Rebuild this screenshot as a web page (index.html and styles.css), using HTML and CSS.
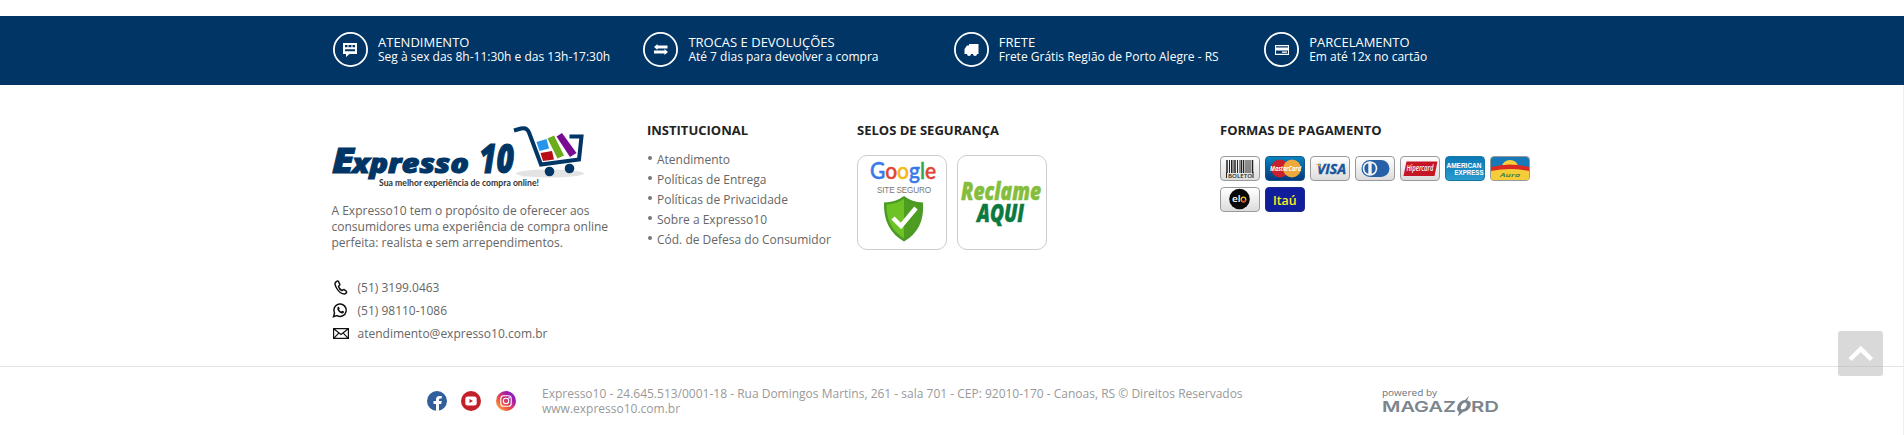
FILE: index.html
```html
<!DOCTYPE html>
<html lang="pt-BR">
<head>
<meta charset="utf-8">
<title>Expresso 10</title>
<link rel="stylesheet" href="styles.css">
</head>
<body>
<section class="benefits">
  <div class="container benefits-row">
    <div class="benefit">
      <svg class="ring" viewBox="0 0 35 35"><circle cx="17.5" cy="17.5" r="16.6"/><path class="solid" fill-rule="evenodd" d="M10 11h14v11h-7.500l-3.500 3v-3h-3zM12 13v2.300h10v-2.300zM12 17.200v2h10v-2z"/><path class="solid" d="M14.500 13h1v3h-1zM18.500 13h1v3h-1z"/></svg>
      <div><strong>ATENDIMENTO</strong><span>Seg à sex das 8h-11:30h e das 13h-17:30h</span></div>
    </div>
    <div class="benefit">
      <svg class="ring" viewBox="0 0 35 35"><circle cx="17.5" cy="17.5" r="16.6"/><path class="solid" d="M11 15l3.500-3v1.500H24.500v3H14.500v1.500zM25 20l-3.500 3v-1.500H11v-3h10.500V17z"/></svg>
      <div><strong>TROCAS E DEVOLUÇÕES</strong><span>Até 7 dias para devolver a compra</span></div>
    </div>
    <div class="benefit">
      <svg class="ring" viewBox="0 0 35 35"><circle cx="17.5" cy="17.5" r="16.6"/><path class="solid" d="M15 12h9.500v10h-1.500a2 2 0 0 1-4 0h-2a2 2 0 0 1-4 0h-2.500v-5l2.500-3.500h2z"/></svg>
      <div><strong>FRETE</strong><span>Frete Grátis Região de Porto Alegre - RS</span></div>
    </div>
    <div class="benefit">
      <svg class="ring" viewBox="0 0 35 35"><circle cx="17.500" cy="17.500" r="16.600"/><path class="solid" fill-rule="evenodd" d="M11 13h14v10h-14zM12 14.200v1.300h12v-1.300zM12 18.500v3.300h12v-3.300z"/><path class="solid" d="M18 19.500h5v1.300h-5z"/></svg>
      <div><strong>PARCELAMENTO</strong><span>Em até 12x no cartão</span></div>
    </div>
  </div>
</section>

<footer class="footer">
  <div class="container footer-cols">
    <div class="about">
      <svg class="logo" viewBox="0 0 252 64">
        <ellipse cx="218" cy="47.500" rx="34" ry="4" fill="#e3e3e3"/>
        <g class="logo-name" stroke="#003565" stroke-width="1">
          <text x="0" y="47" font-size="35" textLength="22" lengthAdjust="spacingAndGlyphs">E</text>
          <text x="20" y="47" font-size="27" textLength="117" lengthAdjust="spacingAndGlyphs">xpresso</text>
          <text x="147" y="47" font-size="40" textLength="35" lengthAdjust="spacingAndGlyphs">10</text>
        </g>
        <text class="slogan" x="47" y="60" textLength="160" lengthAdjust="spacingAndGlyphs">Sua melhor experiência de compra online!</text>
        <path d="M204.500 16l10-3 2.500 9.500-9.500 2.500z" fill="#2695ed"/>
        <path d="M208.500 27l11.500-2 2 8.500-11 1.500z" fill="#b80e16"/>
        <path d="M215.500 12.500l6.500-3 10 20-6.500 3z" fill="#6cab1c"/>
        <path d="M224.500 10.500l5.500-3.500 14.500 20-6.500 4z" fill="#790b91"/>
        <path d="M182 4.500l7-2q6-1.500 8 4l12 32 38-5 2.500-23h-12" fill="none" stroke="#003565" stroke-width="4"/>
        <circle cx="217.500" cy="45.500" r="4.800" fill="#003565"/><circle cx="237.500" cy="42.500" r="4.800" fill="#003565"/>
      </svg>
      <p class="intro"><span>A Expresso10 tem o propósito de oferecer aos</span><span>consumidores uma experiência de compra online</span><span>perfeita: realista e sem arrependimentos.</span></p>
      <ul class="contacts">
        <li><svg viewBox="0 0 17 17"><path d="M4.500 2.500c-2 1-2 3 0 6.500s5.500 6 8 6c1.500-.5 2.500-1.500 2-2.500L12 10.500c-1.500 0-1.200 1.200-2 1-1.500-.6-3-2.300-3.500-4 0-.8 1.400-.8 1.300-2L6.500 2.500c-.5-.8-1.200-.6-2 0z"/></svg>(51) 3199.0463</li>
        <li><svg viewBox="0 0 17 17"><path d="M1.500 14.700l1-3.700a6.200 6.200 0 1 1 2.500 2.600z"/><path class="fill" d="M5.700 5l1.200-.2.900 1.900-.7.900q.8 1.300 2.200 2l.9-.9 1.900.9c0 1.700-1.600 2.200-3.100 1.600-2.200-.9-4.600-3.500-3.300-6.200z"/></svg>(51) 98110-1086</li>
        <li><svg class="mail" viewBox="0 0 17 17"><path d="M1.600 3.600h14.800v9.800H1.600zM2 4l7 5.500L16 4M2 13.200l4.700-5M16 13.200l-4.700-5"/></svg>atendimento@expresso10.com.br</li>
      </ul>
    </div>
    <nav class="links">
      <h2>INSTITUCIONAL</h2>
      <ul><li>Atendimento</li><li>Políticas de Entrega</li><li>Políticas de Privacidade</li><li>Sobre a Expresso10</li><li>Cód. de Defesa do Consumidor</li></ul>
    </nav>
    <div class="seals">
      <h2>SELOS DE SEGURANÇA</h2>
      <div class="seal-row">
        <svg class="seal" viewBox="1 1 88 93">
          <text class="google" x="13" y="24" textLength="66" lengthAdjust="spacingAndGlyphs"><tspan fill="#3779e9" stroke="#3779e9">G</tspan><tspan fill="#e04432" stroke="#e04432">o</tspan><tspan fill="#f5b914" stroke="#f5b914">o</tspan><tspan fill="#3779e9" stroke="#3779e9">g</tspan><tspan fill="#31a550" stroke="#31a550">l</tspan><tspan fill="#e04432" stroke="#e04432">e</tspan></text>
          <text class="safe" x="20" y="38" textLength="54">SITE SEGURO</text>
          <path d="M47 41q8 6 19 6.500 2 27-19 39-21-12-20-39 12-.5 20-6.500z" fill="#4b9a25"/>
          <path d="M47 44q7 5 16.500 5.500 1 23-16.500 34z" fill="#4c9d20"/><path d="M47 44q-8 5-17.500 5.500-.500 23 17.500 34z" fill="#6dc326"/>
          <path d="M36 63l8 8 15-18" fill="none" stroke="#fff" stroke-width="4.500"/>
        </svg>
        <svg class="seal" viewBox="1 1 88 93">
          <text class="reclame" x="4" y="44.500" font-size="24" fill="#85bd3d" stroke="#85bd3d" textLength="80" lengthAdjust="spacingAndGlyphs">Reclame</text>
          <text class="reclame" x="20" y="67" font-size="24.500" fill="#0c7940" stroke="#0c7940" textLength="47" lengthAdjust="spacingAndGlyphs">AQUI</text>
        </svg>
      </div>
    </div>
    <div class="payments">
      <h2>FORMAS DE PAGAMENTO</h2>
      <div class="cards">
        <svg class="card" viewBox="0 0 38 23"><path stroke="#222" stroke-width="1.500" d="M6 3v13M31.500 3v13M14 3v13M22.500 3v13"/><path stroke="#222" stroke-width="1" d="M8.500 3v13M10.500 3v13M12 3v13M16.500 3v13M19 3v13M20.500 3v13M25 3v13M27 3v13M29 3v13"/><path stroke="#222" d="M5.500 15v6M32 15v6"/><text x="7" y="21" font-size="5.500" font-weight="600" fill="#222" textLength="24" lengthAdjust="spacingAndGlyphs">BOLETO</text></svg>
        <svg class="card blue" viewBox="0 0 38 23"><circle cx="14" cy="11.500" r="9" fill="#c8202d"/><circle cx="26" cy="11.500" r="9" fill="#efa83b"/><text x="4" y="14" font-size="7" font-weight="700" font-style="italic" fill="#fff" textLength="31" lengthAdjust="spacingAndGlyphs">MasterCard</text></svg>
        <svg class="card" viewBox="0 0 38 23"><text x="6" y="17" font-size="14" font-weight="700" font-style="italic" fill="#17559c" stroke="#17559c" stroke-width=".4" textLength="29" lengthAdjust="spacingAndGlyphs">VISA</text><path d="M4.500 7h4l2.500 5.500q-2-4-6.500-5.500z" fill="#f0a32a"/></svg>
        <svg class="card" viewBox="0 0 38 23"><path d="M15 3h10a8.500 8.500 0 0 1 0 17H15z" fill="#2760a7"/><circle cx="14" cy="11.500" r="8.500" fill="#2760a7"/><circle cx="14" cy="11.500" r="7.300" fill="#f4f4f4"/><path d="M12.300 6.300v10.400a5.400 5.400 0 0 1 0-10.400zM15.700 6.300v10.400a5.400 5.400 0 0 0 0-10.400z" fill="#2760a7"/></svg>
        <svg class="card" viewBox="0 0 38 23"><path d="M5.500 4.500h31l-3 14.500h-31z" fill="#c51625"/><text x="5.500" y="14" font-size="8" font-weight="600" font-style="italic" fill="#fff" textLength="27" lengthAdjust="spacingAndGlyphs">Hipercard</text></svg>
        <svg class="card amex" viewBox="0 0 38 23"><text x=".5" y="10.500" font-size="6.500" textLength="35" lengthAdjust="spacingAndGlyphs">AMERICAN</text><text x="8.500" y="18" font-size="6.500" textLength="29" lengthAdjust="spacingAndGlyphs">EXPRESS</text></svg>
        <svg class="card aura" viewBox="0 0 38 23"><path d="M0 0h38v12H0z" fill="#1779b8"/><path d="M11 9.500a8 6.500 0 0 1 16 0z" fill="#fbd13a"/><path d="M0 10q19-5 38 0v5H0z" fill="#d92b22"/><path d="M0 14q19-4 38 0v9H0z" fill="#f5cd38"/><text x="9" y="19.500" font-size="5.500" font-style="italic" font-weight="600" fill="#33754b" textLength="20" lengthAdjust="spacingAndGlyphs">Aura</text></svg>
        <svg class="card" viewBox="0 0 38 23"><circle cx="18.500" cy="11" r="10.300" fill="#080808"/><text x="11" y="14" font-size="9.500" font-weight="600" fill="#fff" textLength="8.500" lengthAdjust="spacingAndGlyphs">el</text><circle cx="22.500" cy="11.500" r="2.300" fill="none" stroke="#f0c51d" stroke-width="1.300"/><path d="M20.500 12.500a2.300 2.300 0 0 0 4.300-.5" fill="none" stroke="#e63c25" stroke-width="1.300"/></svg>
        <svg class="card itau" viewBox="0 0 38 23"><text x="7" y="16.500" font-size="13" font-weight="600" fill="#fff01e" textLength="23.500" lengthAdjust="spacingAndGlyphs">Itaú</text></svg>
      </div>
    </div>
  </div>
  <div class="bottom">
    <div class="social">
      <svg viewBox="0 0 20 20"><circle cx="10" cy="10" r="10" fill="#315f9b"/><path d="M9 20v-7H6.500v-3H9V8.500q0-3.500 3.500-3.500h2.300v2.600h-1.500q-1.300 0-1.300 1.200V10h2.700l-.5 3H12v6.800z" fill="#fff"/></svg>
      <svg viewBox="0 0 20 20"><circle cx="10" cy="10" r="10" fill="#c4202a"/><rect x="4.300" y="5.500" width="11.400" height="9" rx="2.500" fill="#fff"/><path d="M8.500 8v4l3.500-2z" fill="#c4202a"/></svg>
      <svg class="insta" viewBox="0 0 20 20"><defs><linearGradient id="ig" x1="0" y1="1" x2="1" y2="0"><stop offset="0" stop-color="#ffc52c"/><stop offset=".4" stop-color="#e84b4d"/><stop offset=".7" stop-color="#a51cab"/><stop offset="1" stop-color="#6a21ce"/></linearGradient></defs><circle cx="10" cy="10" r="10" fill="url(#ig)"/><g fill="none" stroke="#fff" stroke-width="1.100"><rect x="4.800" y="4.800" width="10.400" height="10.400" rx="2.800"/><circle cx="10" cy="10" r="2.700"/></g><circle cx="13.100" cy="6.900" r=".8" fill="#fff"/></svg>
    </div>
    <p class="legal"><span>Expresso10 - 24.645.513/0001-18 - Rua Domingos Martins, 261 - sala 701 - CEP: 92010-170 - Canoas, RS © Direitos Reservados</span><span>www.expresso10.com.br</span></p>
    <svg class="powered" viewBox="0 0 118 30">
      <text x="0" y="9" font-size="8.800" fill="#68737c" textLength="55" lengthAdjust="spacingAndGlyphs">powered by</text>
      <g class="magazord"><text x="0" y="25" textLength="74" lengthAdjust="spacingAndGlyphs">MAGAZ</text><text x="89" y="25" textLength="28" lengthAdjust="spacingAndGlyphs">RD</text></g>
      <path d="M87 9l-2 4.500q5 .5 3.500 5.500-1.500 5-7.500 6l-5 4.500 1-4.500q-3-2-1.500-6 2-5.500 7.500-6zM83 15.500q-3 .5-4 4-.8 2.500 1 3 3.500-.5 4.500-3.500 1-3-1.500-3.500z" fill="#7b858d" fill-rule="evenodd"/>
    </svg>
  </div>
</footer>
<a class="to-top"><svg viewBox="0 0 45 45"><path d="M12 28.500L22.800 18l10.700 10.500" fill="none" stroke="#fff" stroke-width="4.500"/></svg></a>
</body>
</html>
```
FILE: styles.css
```css
* { box-sizing: border-box; }
body { margin: 0; height: 435px; overflow: hidden; padding-top: 16px; background: #fff; font: 12px/16px "Open Sans", sans-serif; color: #666; }
h2, p, ul { margin: 0; padding: 0; }
ul { list-style: none; }
span { white-space: nowrap; }
svg { overflow: visible; }
.container { width: 1240px; margin: 0 auto; }
.benefits { background: #003565; height: 69px; }
.benefits-row { display: grid; grid-template-columns: 310.400px 310.400px 310.400px 1fr; padding: 16px 0 0 1px; }
.benefit { display: flex; gap: 10px; color: #fff; line-height: 15px; }
.benefit strong, .benefit span { display: block; font-weight: 400; }
.benefit strong { font-size: 13px; line-height: 14px; padding-top: 3px; }
.ring { width: 35px; height: 35px; flex: none; }
.ring circle { fill: none; stroke: #fff; stroke-width: 1.800; }
.solid { fill: #fff; }
.footer { border-right: 1px solid #eee; height: 350px; }
.footer-cols { display: grid; grid-template-columns: 315px 210px 363px 1fr; height: 281px; padding-top: 36px; }
h2 { font-size: 13px; font-weight: 700; line-height: 18px; color: #222; white-space: nowrap; padding-left: .5px; }
.logo { display: block; width: 252px; height: 64px; margin-top: 5px; }
.logo-name { font-family: "Open Sans", sans-serif; font-weight: 800; font-style: italic; fill: #003565; }
.slogan { font: 700 8.500px Lato, sans-serif; fill: #333; }
.intro { margin-top: 13px; }
.intro span, .legal span { display: block; }
.contacts { margin-top: 25px; }
.contacts li { display: flex; align-items: center; gap: 9px; height: 23px; }
.contacts svg { width: 17px; height: 17px; fill: none; stroke: #111; stroke-width: 1.500; }
.contacts .mail { stroke-width: 1.200; }
.contacts .fill { fill: #111; stroke: none; }
.links ul { margin-top: 11px; }
.links li { display: flex; height: 20px; line-height: 20px; white-space: nowrap; }
.links li::before { content: ""; width: 4px; height: 4px; border-radius: 50%; background: #777; margin: 6px 5.500px 0 1px; }
.seal-row { display: flex; gap: 10px; margin-top: 16px; }
.seal { width: 90px; height: 95px; border: 1px solid #ccc; border-radius: 10px; }
.google { font: 500 22.500px Lato, sans-serif; stroke-width: .5; }
.safe { font: 8.200px "Liberation Sans", sans-serif; fill: #777; }
.reclame { font-family: "Open Sans", sans-serif; font-weight: 800; font-style: italic; stroke-width: .5; }
.cards { display: flex; flex-wrap: wrap; gap: 6px 5px; margin-top: 17px; width: 320px; }
.card { width: 40px; height: 25px; border: 1px solid #999; border-radius: 4px; background: linear-gradient(#fff, #dcdcdc); font-family: "Open Sans", sans-serif; overflow: hidden; }
.card.blue { background: linear-gradient(#0784bd, #06377d); border-color: #15588b; }
.card.amex { background: linear-gradient(#0879b5, #2b9cce); border-color: #1977a5; font-family: "Liberation Sans", sans-serif; font-weight: 700; fill: #fff; }
.card.aura { background: #f5cd38; }
.card.itau { background: #101e9b; border-color: #1c2b8c; }
.bottom { display: flex; align-items: flex-start; border-top: 1px solid #e3e3e3; height: 69px; padding-left: 427px; }
.social { display: flex; gap: 14px; margin-top: 24px; width: 115px; }
.social svg { width: 20px; height: 20px; }
.social .insta { margin-left: 1px; }
.legal { width: 840px; margin-top: 19px; line-height: 15px; color: #999; }
.powered { width: 118px; height: 30px; margin-top: 20px; font-family: "Open Sans", sans-serif; }
.magazord { font: 600 15px Inter, sans-serif; fill: #7b858d; }
.to-top { position: absolute; left: 1838px; top: 331px; width: 45px; height: 45px; border-radius: 3px; background: rgba(180,180,180,.5); }
.to-top svg { display: block; }
```
